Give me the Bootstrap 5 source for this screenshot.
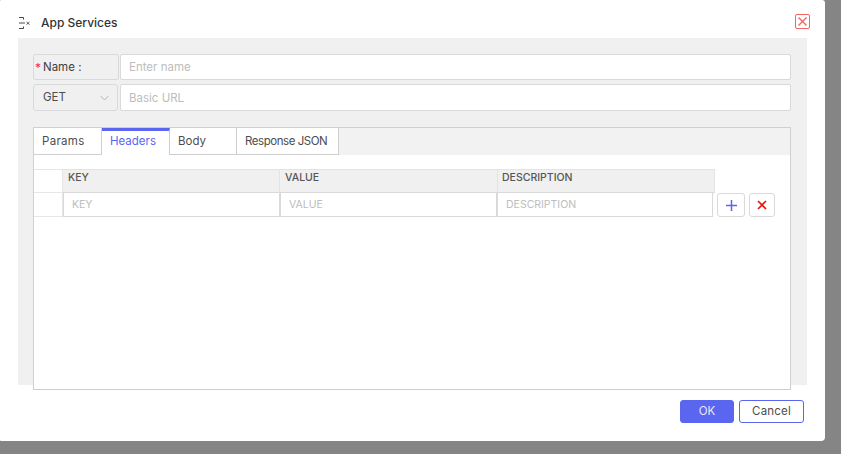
<!DOCTYPE html>
<html lang="en">
<head>
<meta charset="utf-8">
<title>App Services</title>
<link href="https://cdn.jsdelivr.net/npm/bootstrap@5.3.0/dist/css/bootstrap.min.css" rel="stylesheet">
<style>
html,body{height:100%;}
body{background:#858585;font-family:"Inter","Noto Sans",sans-serif;font-size:11.5px;color:#4d4d4d;overflow:hidden;}
.dlg{width:825px;height:441px;background:#fff;border-radius:1px 3px 4px 1px;display:flex;flex-direction:column;}
.dlg-head{height:38px;padding:14px 15px 0 18px;}
.dlg-title{font-size:12px;font-weight:500;color:#333;line-height:18px;margin-left:1px;}
.dlg-close{width:15px;height:15px;padding:0;border:1px solid #f4645f;border-radius:2px;background:#fff;display:flex;align-items:center;justify-content:center;}
.panel-gray{background:#f0f0f0;margin:0 18px;height:347px;padding:16px 16px 0 15px;}
.field-label{width:86px;height:26px;background:#f0f0f0;border:1px solid #d9d9d9;border-radius:2px;padding:1px 0 0 1px;color:#404040;flex-shrink:0;}
.field-label .req{color:#f0313c;font-size:12px;width:8px;line-height:1;}
.field-input.form-control{height:26px;border:1px solid #d9d9d9;border-radius:2px;padding:0 8px;font-size:11.5px;box-shadow:none;}
.field-input.form-control.tall{height:27px;}
.form-control::placeholder{color:#bdbdbd;}
.method.form-select{width:85px;flex-shrink:0;height:27px;border:1px solid #d9d9d9;border-radius:3px;background-color:#f0f0f0;color:#4d4d4d;font-size:11.5px;padding:1px 0 0 9px;background-position:right 8px center;background-size:9px 6px;background-image:url("data:image/svg+xml,%3Csvg xmlns='http://www.w3.org/2000/svg' viewBox='0 0 9 6'%3E%3Cpath d='M.5.8 4.5 5l4-4.200' fill='none' stroke='%23a8a8a8' stroke-width='.8'/%3E%3C/svg%3E");}
.gap-one{margin-left:1px;}
.gap-two{margin-left:2px;}
.tabs-box{margin-top:16px;height:263px;background:#fff;border:1px solid #cfcfcf;}
.tabs-bar.nav{height:27px;background:#f2f2f2;flex-wrap:nowrap;}
.tabs-bar .nav-link{height:27px;padding:0 0 0 8px;border:0;border-right:1px solid #cfcfcf;border-bottom:1px solid #cfcfcf;border-radius:0;color:#4d4d4d;background:#fff;font-size:11.5px;line-height:26px;text-align:left;}
.tabs-bar .nav-link.active{color:#5a66f0;border-top:3px solid #5a66f0;border-bottom:0;line-height:20px;}
.w-params{width:68px;letter-spacing:.3px;}.w-headers{width:68px;}.w-body{width:67px;}.w-json{width:102px;letter-spacing:-.45px;}
.grid-area{padding-top:14px;}
.kv-row{display:flex;}
.kv-corner{width:29px;height:24px;border:1px solid #e6e6e6;border-left:0;background:#fff;flex-shrink:0;}
.kv-corner.low{border-top:0;}
.kv-head{height:24px;background:#f0f0f0;border:1px solid #e3e3e3;border-bottom:1px solid #d9d9d9;border-left:0;padding:0 5px;font-weight:500;font-size:10.5px;line-height:15px;color:#555;}
.kv-head.c3{padding-left:4px;}
.kv-input.form-control{height:24px;border:1px solid #d9d9d9;border-top:0;border-radius:0;padding:0 8px;font-size:10.5px;box-shadow:none;}
.c1{width:217px;}.c2{width:218px;}.c3{width:217px;}.i1{width:217px;}.i2{width:217px;}.i3{width:216px;}
.mini{height:24px;padding:0;background:#fff;border:1px solid #d9d9d9;border-radius:3px;display:flex;align-items:center;justify-content:center;}
.mini.add{width:28px;margin-left:4px;}
.mini.del{width:26px;margin-left:4px;}
.dlg-foot{padding:15px 21px 0 0;}
.act{height:23px;padding:0;font-size:11.5px;border-radius:3px;line-height:1;}
.act.ok{width:54px;background:#5a66f0;border:1px solid #5a66f0;color:#e6e8fd;}
.act.no{width:65px;margin-left:5px;background:#fff;border:1px solid #5a66f0;color:#4d4d4d;letter-spacing:.2px;}
</style>
</head>
<body>
<div class="dlg">
  <div class="dlg-head d-flex align-items-start justify-content-between">
    <div class="d-flex align-items-center gap-2">
      <svg width="14" height="14" viewBox="0 0 14 14" fill="none" stroke="#333" stroke-width=".9"><path d="M1 1.500h4.500v2M1 7h6M1 12.500h4.500v-2"/><path d="M8.500 6l3 2.500M11.500 6l-3 2.500" stroke-width=".8"/></svg>
      <span class="dlg-title">App Services</span>
    </div>
    <button class="dlg-close" type="button" aria-label="Close">
      <svg width="11" height="11" viewBox="0 0 11 11" stroke="#f4645f" stroke-width="1.400"><path d="M1.500 1.500l8 8M9.500 1.500l-8 8"/></svg>
    </button>
  </div>
  <div class="panel-gray">
    <div class="d-flex">
      <div class="field-label d-flex align-items-center"><span class="req">*</span><span>Name :</span></div>
      <input class="field-input form-control gap-one" placeholder="Enter name">
    </div>
    <div class="d-flex mt-1">
      <select class="method form-select"><option>GET</option></select>
      <input class="field-input tall form-control gap-two" placeholder="Basic URL">
    </div>
    <div class="tabs-box">
      <div class="tabs-bar nav">
        <a class="nav-link w-params" href="#">Params</a>
        <a class="nav-link active w-headers" href="#">Headers</a>
        <a class="nav-link w-body" href="#">Body</a>
        <a class="nav-link w-json" href="#">Response JSON</a>
      </div>
      <div class="grid-area">
        <div class="kv-row">
          <div class="kv-corner"></div>
          <div class="kv-head c1">KEY</div>
          <div class="kv-head c2">VALUE</div>
          <div class="kv-head c3">DESCRIPTION</div>
        </div>
        <div class="kv-row">
          <div class="kv-corner low"></div>
          <input class="kv-input form-control i1 flex-grow-0" placeholder="KEY">
          <input class="kv-input form-control i2 flex-grow-0" placeholder="VALUE">
          <input class="kv-input form-control i3 flex-grow-0" placeholder="DESCRIPTION">
          <button class="mini add" type="button" aria-label="Add"><svg width="13" height="13" viewBox="0 0 13 13" stroke="#5a66f0" stroke-width="1.500"><path d="M6.500 1v11M1 6.500h11"/></svg></button>
          <button class="mini del" type="button" aria-label="Remove"><svg width="10" height="10" viewBox="0 0 10 10" stroke="#f01010" stroke-width="1.700"><path d="M1 1l8 8M9 1l-8 8"/></svg></button>
        </div>
      </div>
    </div>
  </div>
  <div class="dlg-foot d-flex justify-content-end">
    <button class="act ok" type="button">OK</button>
    <button class="act no" type="button">Cancel</button>
  </div>
</div>
<script src="https://cdn.jsdelivr.net/npm/bootstrap@5.3.0/dist/js/bootstrap.bundle.min.js"></script>
</body>
</html>
